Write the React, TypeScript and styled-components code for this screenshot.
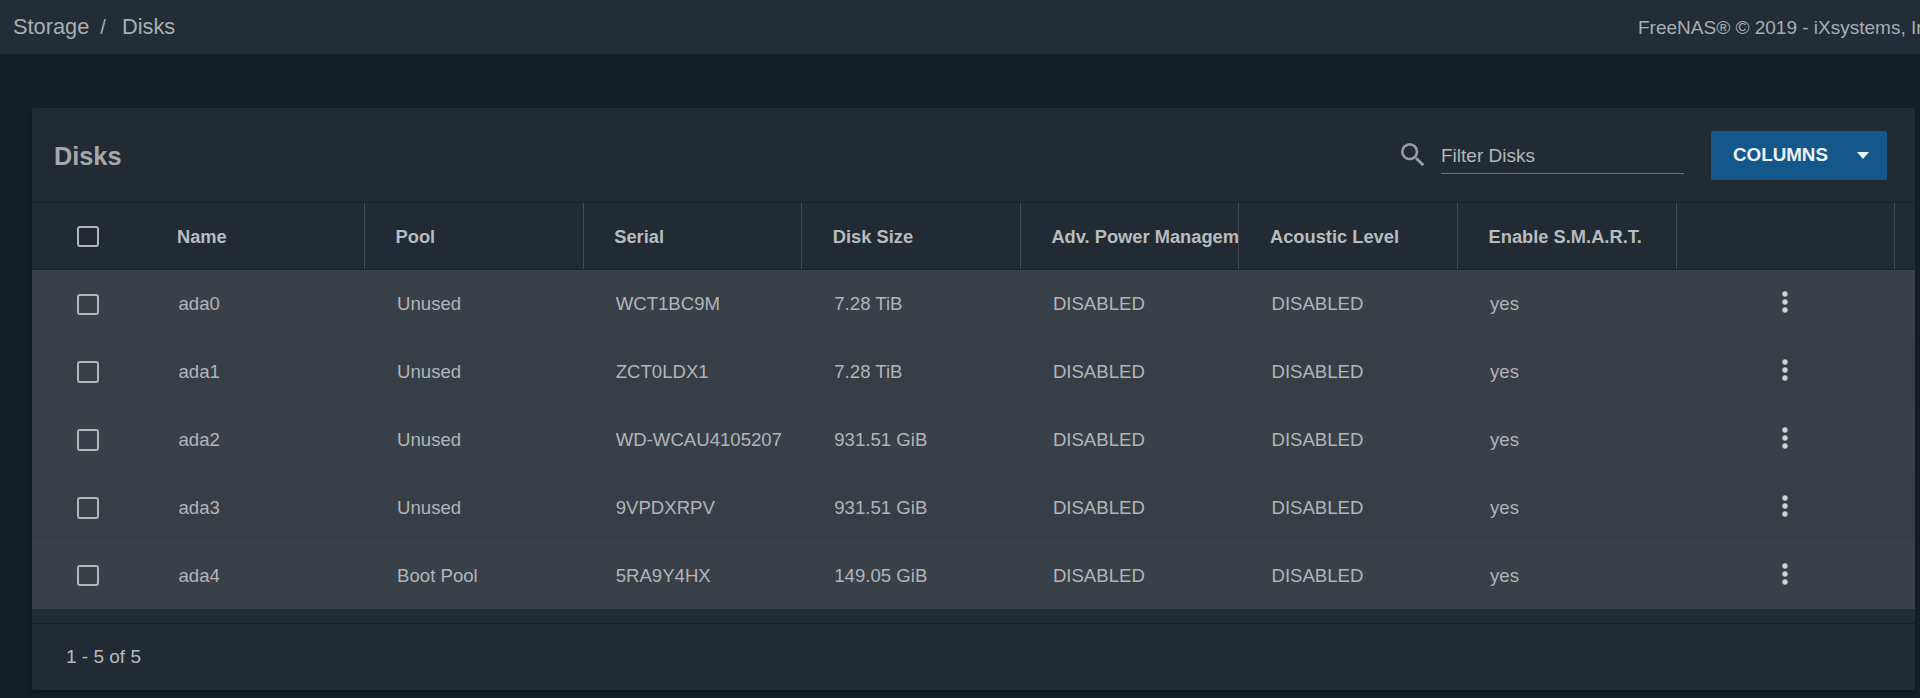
import React from "react";
import styled, { createGlobalStyle } from "styled-components";

const Global = createGlobalStyle`
  html, body { margin: 0; padding: 0; background: #151d27; overflow: hidden; }
  body { font-family: "Liberation Sans", Arial, sans-serif; }
`;

const Page = styled.div`
  width: 1920px;
  height: 698px;
  overflow: hidden;
  background: #151d27;
`;

const TopBar = styled.header`
  height: 54px;
  display: flex;
  align-items: center;
  justify-content: space-between;
  background: #232d36;
  padding-left: 13px;
  color: #a9aeb2;
  overflow: hidden;
`;

const Crumbs = styled.div`
  display: flex;
  align-items: center;
  font-size: 21.8px;
  flex: none;
`;

const Slash = styled.span`
  font-size: 20px;
  margin: 0 16px 0 11px;
`;

const Copyright = styled.div`
  font-size: 19px;
  white-space: nowrap;
  flex: none;
  width: 282px;
  overflow: hidden;
  padding-top: 1px;
`;

const Panel = styled.section`
  margin: 54px 5px 0 32px;
  height: 582px;
  background: #222b33;
  border-radius: 2px;
  display: flex;
  flex-direction: column;
  box-shadow: 0 2px 4px rgba(0, 0, 0, 0.25);
`;

const PanelHead = styled.div`
  height: 94px;
  display: flex;
  align-items: center;
  padding: 0 28px 0 22px;
  border-bottom: 1px solid #171f28;
  box-sizing: content-box;
  flex: none;
`;

const Title = styled.h1`
  margin: 0;
  padding-top: 2px;
  font-size: 25.3px;
  font-weight: 700;
  color: #a5a8aa;
  flex: 1;
`;

const SearchIcon = styled.svg`
  width: 32px;
  height: 32px;
  fill: #9a9d9f;
  margin-right: 12px;
`;

const FilterField = styled.div`
  width: 243px;
  height: 36px;
  margin-right: 27px;
  margin-top: 1px;
  box-sizing: border-box;
  border-bottom: 1.5px solid #6a7177;
  color: #b4b7b9;
  font-size: 19px;
  line-height: 36px;
`;

const ColumnsButton = styled.button`
  width: 176px;
  height: 49px;
  border: 0;
  border-radius: 2px;
  background: #14578a;
  color: #eef2f5;
  font: 700 18.8px "Liberation Sans", Arial, sans-serif;
  display: flex;
  align-items: center;
  justify-content: space-between;
  padding: 0 18px 0 22px;
`;

const Caret = styled.span`
  width: 0;
  height: 0;
  border-left: 6.5px solid transparent;
  border-right: 6.5px solid transparent;
  border-top: 7px solid #eef2f5;
`;

const Table = styled.div`
  flex: none;
`;

const columns = "114.5px repeat(8, 218.6px)";

const HeadRow = styled.div`
  height: 66px;
  display: grid;
  grid-template-columns: ${columns};
  border-bottom: 1px solid #1b232c;
  box-sizing: content-box;
`;

const HeadCell = styled.div`
  display: flex;
  align-items: center;
  padding: 1px 0 0 30.5px;
  box-sizing: border-box;
  color: #b9bcbe;
  font-size: 18.3px;
  font-weight: 700;
  white-space: nowrap;
  overflow: hidden;
  border-right: 1px solid #414b52;
`;

const CheckCell = styled.div`
  display: flex;
  align-items: center;
  padding: 1px 0 0 44.5px;
`;

const Check = styled.span`
  width: 22px;
  height: 21.5px;
  box-sizing: border-box;
  border: 2.5px solid #b3b6b8;
  border-radius: 3px;
`;

const Row = styled.div<{ $alt: boolean }>`
  height: 67.8px;
  display: grid;
  grid-template-columns: ${columns};
  background: ${(p) => (p.$alt ? "#383e45" : "#3a4047")};
`;

const Cell = styled.div`
  display: flex;
  align-items: center;
  padding: 1px 0 0 32px;
  margin-right: 21px;
  min-width: 0;
  color: #b1b5b8;
  font-size: 18.6px;
  white-space: nowrap;
  overflow: hidden;
`;

const KebabCell = styled.div`
  display: flex;
  align-items: center;
  justify-content: center;
  padding-right: 2px;
`;

const Kebab = styled.svg`
  width: 6px;
  height: 24px;
  fill: #cfd1d3;
  margin-top: -3px;
`;

const Footer = styled.footer`
  margin-top: 14px;
  flex: 1;
  border-top: 1.5px solid #171f28;
  display: flex;
  align-items: center;
  padding-left: 34px;
  color: #b8bbbd;
  font-size: 19px;
`;

const headers = [
  "Name",
  "Pool",
  "Serial",
  "Disk Size",
  "Adv. Power Management",
  "Acoustic Level",
  "Enable S.M.A.R.T.",
  "",
];

const disks = [
  ["ada0", "Unused", "WCT1BC9M", "7.28 TiB"],
  ["ada1", "Unused", "ZCT0LDX1", "7.28 TiB"],
  ["ada2", "Unused", "WD-WCAU41052071", "931.51 GiB"],
  ["ada3", "Unused", "9VPDXRPV", "931.51 GiB"],
  ["ada4", "Boot Pool", "5RA9Y4HX", "149.05 GiB"],
];

export default function App() {
  return (
    <Page>
      <Global />
      <TopBar>
        <Crumbs>
          Storage
          <Slash>/</Slash>
          Disks
        </Crumbs>
        <Copyright>FreeNAS® © 2019 - iXsystems, Inc.</Copyright>
      </TopBar>
      <Panel>
        <PanelHead>
          <Title>Disks</Title>
          <SearchIcon viewBox="0 0 24 24">
            <path d="M15.5 14h-.79l-.28-.27A6.471 6.471 0 0 0 16 9.5 6.5 6.5 0 1 0 9.5 16c1.61 0 3.09-.59 4.23-1.57l.27.28v.79l5 4.99L20.49 19l-4.99-5zm-6 0C7.01 14 5 11.99 5 9.5S7.01 5 9.5 5 14 7.01 14 9.5 11.99 14 9.5 14z" />
          </SearchIcon>
          <FilterField>Filter Disks</FilterField>
          <ColumnsButton>
            COLUMNS
            <Caret />
          </ColumnsButton>
        </PanelHead>
        <Table>
          <HeadRow>
            <CheckCell>
              <Check />
            </CheckCell>
            {headers.map((h, i) => (
              <HeadCell key={i}>{h}</HeadCell>
            ))}
          </HeadRow>
          {disks.map((d, i) => (
            <Row key={d[0]} $alt={i % 2 === 1}>
              <CheckCell>
                <Check />
              </CheckCell>
              {d.map((v) => (
                <Cell key={v}>{v}</Cell>
              ))}
              <Cell>DISABLED</Cell>
              <Cell>DISABLED</Cell>
              <Cell>yes</Cell>
              <KebabCell>
                <Kebab viewBox="0 0 6 24">
                  <circle cx="3" cy="4" r="2.7" />
                  <circle cx="3" cy="12" r="2.7" />
                  <circle cx="3" cy="20" r="2.7" />
                </Kebab>
              </KebabCell>
            </Row>
          ))}
        </Table>
        <Footer>1 - 5 of 5</Footer>
      </Panel>
    </Page>
  );
}
